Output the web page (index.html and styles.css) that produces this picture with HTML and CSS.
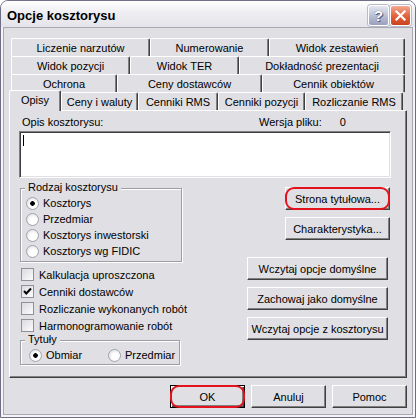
FILE: index.html
```html
<!DOCTYPE html>
<html lang="pl">
<head>
  <meta charset="UTF-8" />
  <title>Opcje kosztorysu</title>
  <link rel="stylesheet" href="styles.css">
</head>
<body>
  <div class="window">
    <div class="titlebar">
      <span class="caption">Opcje kosztorysu</span>
      <div class="caption-buttons">
        <span class="cap-btn help">?</span>
        <span class="cap-btn close">
          <svg width="13" height="13" viewBox="0 0 13 13">
            <path d="M2.5 2.5 L10.5 10.5 M10.5 2.5 L2.5 10.5" stroke="#fff" stroke-width="2.2" stroke-linecap="square"/>
          </svg>
        </span>
      </div>
    </div>

    <div class="client">
      <!-- Tab strip -->
      <div class="tabs">
        <div class="tab-row row-1">
          <span class="tab">Liczenie narzutów</span>
          <span class="tab">Numerowanie</span>
          <span class="tab">Widok zestawień</span>
        </div>
        <div class="tab-row row-2">
          <span class="tab">Widok pozycji</span>
          <span class="tab">Widok TER</span>
          <span class="tab">Dokładność prezentacji</span>
        </div>
        <div class="tab-row row-3">
          <span class="tab">Ochrona</span>
          <span class="tab">Ceny dostawców</span>
          <span class="tab">Cennik obiektów</span>
        </div>
        <div class="tab-row row-4">
          <span class="tab active">Opisy</span>
          <span class="tab">Ceny i waluty</span>
          <span class="tab">Cenniki RMS</span>
          <span class="tab">Cenniki pozycji</span>
          <span class="tab">Rozliczanie RMS</span>
        </div>
      </div>

      <div class="panel">
        <div class="memo-head">
          <span class="memo-label">Opis kosztorysu:</span>
          <span>Wersja pliku:</span>
          <span class="version-no">0</span>
        </div>
        <div class="memo"><span class="caret"></span></div>

        <div class="lower">
          <div class="col-left">
            <div class="group kind">
              <span class="group-title">Rodzaj kosztorysu</span>
              <label class="radio-row"><span class="radio checked"></span>Kosztorys</label>
              <label class="radio-row"><span class="radio"></span>Przedmiar</label>
              <label class="radio-row"><span class="radio"></span>Kosztorys inwestorski</label>
              <label class="radio-row"><span class="radio"></span>Kosztorys wg FIDIC</label>
            </div>

            <div class="checks">
              <label class="check-row"><span class="check"></span>Kalkulacja uproszczona</label>
              <label class="check-row">
                <span class="check">
                  <svg width="11" height="11" viewBox="0 0 11 11">
                    <path d="M2 5 L4.3 7.5 L9 2.5" fill="none" stroke="#000" stroke-width="2"/>
                  </svg>
                </span>Cenniki dostawców
              </label>
              <label class="check-row"><span class="check"></span>Rozliczanie wykonanych robót</label>
              <label class="check-row"><span class="check"></span>Harmonogramowanie robót</label>
            </div>

            <div class="group titles">
              <span class="group-title">Tytuły</span>
              <div class="radio-line">
                <label class="radio-row obmiar"><span class="radio checked"></span>Obmiar</label>
                <label class="radio-row"><span class="radio"></span>Przedmiar</label>
              </div>
            </div>
          </div>

          <div class="col-right">
            <button class="btn btn-short marked">Strona tytułowa...</button>
            <button class="btn btn-short">Charakterystyka...</button>
            <button class="btn btn-wide spaced">Wczytaj opcje domyślne</button>
            <button class="btn btn-wide">Zachowaj jako domyślne</button>
            <button class="btn btn-wide">Wczytaj opcje z kosztorysu</button>
          </div>
        </div>
      </div>

      <div class="footer">
        <button class="btn btn-footer default marked">OK</button>
        <button class="btn btn-footer">Anuluj</button>
        <button class="btn btn-footer">Pomoc</button>
      </div>
    </div>
  </div>
</body>
</html>
```

FILE: styles.css
```css
:root {
  --face: #e0dfe3;
  --shadow: #808080;
  --dark: #404040;
  --etch: #9d9da5;
}

* {
  box-sizing: border-box;
}

body {
  margin: 0;
  background: #fff;
  color: #000;
  font-family: "Liberation Sans", Arial, sans-serif;
  font-size: 11px;
}

.window {
  width: 416px;
  height: 418px;
  border: 1px solid #6e6f86;
  border-radius: 8px 8px 0 0;
  background: #f4f4f7;
  display: flex;
  flex-direction: column;
  overflow: hidden;
}

/* Title bar */
.titlebar {
  height: 26px;
  padding: 3px 4px 0 6px;
  display: flex;
  align-items: center;
  background: linear-gradient(#ffffff, #eeeef2 45%, #e4e4ea);
}

.caption {
  flex: 1;
  font-size: 13px;
  font-weight: bold;
}

.caption-buttons {
  display: flex;
  gap: 1px;
}

.cap-btn {
  width: 21px;
  height: 21px;
  border: 1px solid #fff;
  border-radius: 3px;
  display: flex;
  align-items: center;
  justify-content: center;
  box-shadow: 0 0 0 1px #b9bbc8;
}

.help {
  background: linear-gradient(#e6e8f1, #b7bcd2 55%, #9ba1bd);
  color: #fff;
  font-size: 15px;
  font-weight: bold;
  text-shadow: 0 0 1px #3c4060, 1px 1px 0 #5c6080;
}

.close {
  background: linear-gradient(#f3ab94, #e3653f 50%, #c9411d);
}

/* Client area */
.client {
  flex: 1;
  margin: 0 2px 2px;
  border: 1px solid #a9a9b3;
  background: var(--face);
  padding: 10px 5px 6px;
  display: flex;
  flex-direction: column;
}

.tabs {
  display: flex;
  flex-direction: column;
}

.tab-row {
  display: grid;
  height: 18px;
  margin: 0 2px;
}

.row-1 { grid-template-columns: 139px 119px 1fr; }
.row-2 { grid-template-columns: 119px 109px 1fr; }
.row-3 { grid-template-columns: 106px 145px 1fr; }
.row-4 {
  grid-template-columns: 52px 77px 80px 87px 98px;
  margin: 0;
}

.tab {
  height: 18px;
  display: flex;
  align-items: center;
  justify-content: center;
  white-space: nowrap;
  background: var(--face);
  border-top: 1px solid #fff;
  border-left: 1px solid #fff;
  border-right: 1px solid var(--dark);
  border-radius: 2px 2px 0 0;
  box-shadow: inset -1px 0 var(--shadow);
}

.tab.active {
  position: relative;
  z-index: 1;
  height: 21px;
  margin-top: -2px;
  padding-bottom: 3px;
}

.panel {
  height: 268px;
  padding: 5px 9px 0;
  border-top: 1px solid #fff;
  border-left: 1px solid #fff;
  border-right: 1px solid var(--dark);
  border-bottom: 1px solid var(--dark);
  box-shadow: inset -1px -1px var(--shadow);
}

.memo-head {
  display: flex;
  height: 13px;
  line-height: 13px;
  margin-left: 3px;
}

.memo-label {
  width: 237px;
}

.version-no {
  margin-left: 18px;
}

.memo {
  width: 372px;
  height: 47px;
  margin-top: 2px;
  padding: 3px 0 0 2px;
  background: #fff;
  border-top: 1px solid var(--shadow);
  border-left: 1px solid var(--shadow);
  border-right: 1px solid #fff;
  border-bottom: 1px solid #fff;
  box-shadow: inset 1px 1px var(--dark), inset -1px -1px var(--face);
}

.caret {
  display: block;
  width: 1px;
  height: 11px;
  margin-left: 1px;
  background: #000;
}

.lower {
  display: flex;
  margin-top: 4px;
}

.col-left {
  flex-shrink: 0;
  width: 163px;
  margin-left: 1px;
  display: flex;
  flex-direction: column;
}

/* Group boxes */
.group {
  position: relative;
  margin-top: 6px;
  border: 1px solid var(--etch);
  box-shadow: inset 1px 1px #fff, 1px 1px #fff;
}

.kind {
  width: 162px;
  padding: 6px 0 2px 5px;
}

.titles {
  width: 160px;
  padding: 6px 0 1px 8px;
}

.group-title {
  position: absolute;
  top: -8px;
  left: 4px;
  padding: 0 3px;
  line-height: 13px;
  background: var(--face);
}

.radio-row {
  display: flex;
  align-items: center;
  gap: 4px;
  height: 16px;
  white-space: nowrap;
}

.radio-line {
  display: flex;
}

.obmiar {
  width: 79px;
}

.radio {
  flex-shrink: 0;
  width: 13px;
  height: 13px;
  border-radius: 50%;
  border: 1px solid #a3a3ad;
  background: radial-gradient(circle at 60% 60%, #fff 35%, #d6d6dc);
}

.radio.checked {
  background:
    radial-gradient(circle, #000 0 2px, transparent 2.6px),
    radial-gradient(circle at 60% 60%, #fff 35%, #d6d6dc);
}

.checks {
  margin-top: 4px;
}

.check-row {
  display: flex;
  align-items: center;
  gap: 5px;
  height: 17px;
  margin-left: 1px;
  white-space: nowrap;
}

.check {
  flex-shrink: 0;
  width: 13px;
  height: 13px;
  border: 1px solid #8f9098;
  background: linear-gradient(135deg, #dadae0, #fcfcfc);
  display: flex;
  align-items: center;
  justify-content: center;
}

/* Buttons */
.col-right {
  flex: 1;
  display: flex;
  flex-direction: column;
  align-items: flex-end;
  gap: 7px;
  padding-top: 5px;
}

.btn {
  position: relative;
  height: 23px;
  padding: 0;
  font: inherit;
  color: #000;
  background: var(--face);
  border-top: 1px solid #fff;
  border-left: 1px solid #fff;
  border-right: 1px solid var(--dark);
  border-bottom: 1px solid var(--dark);
  box-shadow: inset -1px -1px var(--shadow);
  white-space: nowrap;
}

.btn-short {
  width: 105px;
  margin-right: 7px;
}

.btn-wide {
  width: 141px;
  margin-right: 9px;
}

.spaced {
  margin-top: 10px;
}

.btn-footer {
  width: 75px;
}

.btn.default {
  border: 1px solid #000;
  box-shadow: inset 1px 1px #fff, inset -1px -1px var(--dark), inset -2px -2px var(--shadow);
}

.marked::after {
  content: "";
  position: absolute;
  inset: -1px;
  border: 2px solid #e3121c;
  border-radius: 9px;
}

.footer {
  display: flex;
  justify-content: flex-end;
  gap: 6px;
  margin-top: 7px;
}
```
